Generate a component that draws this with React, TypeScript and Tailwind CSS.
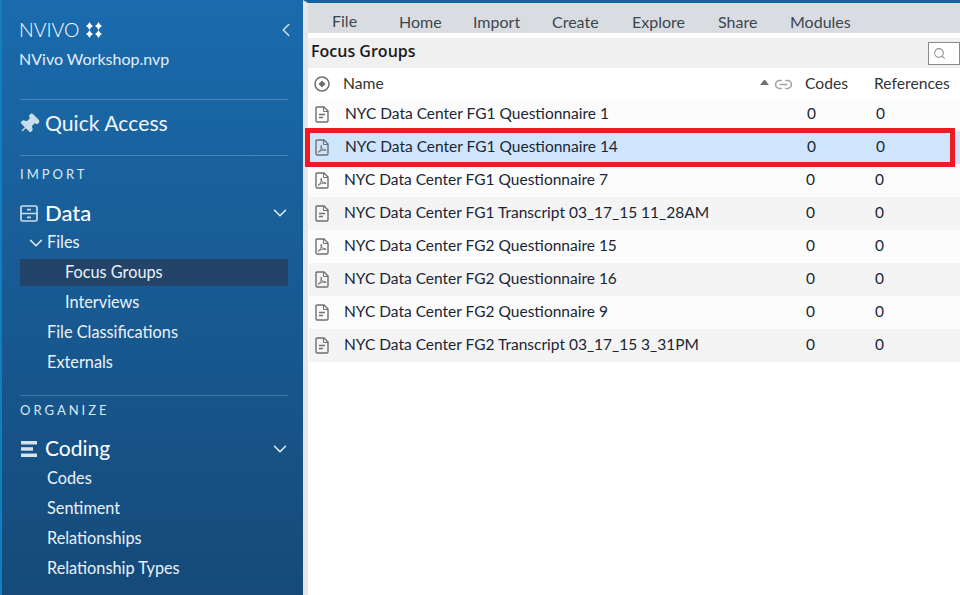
import { ChevronDown, ChevronLeft, Pin, Search, Link2 } from 'lucide-react';

const rows = [
  { name: 'NYC Data Center FG1 Questionnaire 1', type: 'doc' },
  { name: 'NYC Data Center FG1 Questionnaire 14', type: 'pdf', selected: true },
  { name: 'NYC Data Center FG1 Questionnaire 7', type: 'pdf' },
  { name: 'NYC Data Center FG1 Transcript 03_17_15 11_28AM', type: 'doc' },
  { name: 'NYC Data Center FG2 Questionnaire 15', type: 'pdf' },
  { name: 'NYC Data Center FG2 Questionnaire 16', type: 'pdf' },
  { name: 'NYC Data Center FG2 Questionnaire 9', type: 'doc' },
  { name: 'NYC Data Center FG2 Transcript 03_17_15 3_31PM', type: 'doc' },
];

const tabs = [
  { label: 'File', cls: 'w-[41px] -mt-[2px]' },
  { label: 'Home', cls: 'w-[74px] ml-[26px]' },
  { label: 'Import', cls: 'w-[79px]' },
  { label: 'Create', cls: 'w-[80px]' },
  { label: 'Explore', cls: 'w-[86px]' },
  { label: 'Share', cls: 'w-[72px]' },
  { label: 'Modules', cls: 'w-[70px]' },
];

function FileIcon({ type }: { type: string }) {
  return (
    <svg width="16" height="17" viewBox="0 0 16 17" fill="none" stroke="#6f6f6f" strokeWidth="1.4">
      <path d="M2 2.2c0-.7.5-1.2 1.2-1.2H10l4 4v9.8c0 .7-.5 1.2-1.2 1.2H3.2c-.7 0-1.2-.5-1.2-1.2z" />
      <path d="M9.5 1v4.500H14" strokeWidth="1" />
      {type === 'doc' ? (
        <path d="M5 8.500h6M5 11.500h4" strokeWidth="1.300" />
      ) : (
        <path d="M4 13.500c2-1 3.500-4 3.500-6.500 0-1-.8-.8-.6.3.4 2 2.200 3.900 4.600 4.200 1 .1.8-.8-.2-.8-2.200 0-5.600 1.200-7.300 2.800z" strokeWidth="1" />
      )}
    </svg>
  );
}

function Logo() {
  return (
    <div className="flex items-center -ml-[1px]">
      <span className="text-[19.5px] leading-none font-light text-white">NVIVO</span>
      <svg width="16" height="16" viewBox="0 0 16 16" fill="#fff" className="ml-[6px]">
        <path d="M3.500 0l1.500 2.500L7 4 5 5.500 3.500 8 2 5.500 0 4l2-1.500z" />
        <path d="M3.500 8l1.500 2.500L7 12l-2 1.500L3.500 16 2 13.500 0 12l2-1.500z" />
        <path d="M12.500 0L14 2.500 16 4l-2 1.500L12.500 8 11 5.500 9 4l2-1.500z" />
        <path d="M12.500 8l1.500 2.500L16 12l-2 1.500L12.500 16 11 13.500 9 12l2-1.500z" />
      </svg>
    </div>
  );
}

function NavItem({ label, indent, active }: { label: string; indent?: boolean; active?: boolean }) {
  return (
    <div
      className={`h-[27px] mb-[3px] flex items-center text-[16.3px] text-[#eaf2f9] rounded-[1px] ${indent ? 'pl-[45px]' : 'pl-[27px]'} ${active ? 'bg-[#234468]' : ''}`}
    >
      {label}
    </div>
  );
}

export default function App() {
  return (
    <div className="w-[960px] h-[595px] overflow-hidden flex bg-white font-['Lato',sans-serif]">
      {/* Sidebar */}
      <aside className="w-[303px] h-full shrink-0 border-l-2 border-[#0f7fc0] bg-gradient-to-b from-[#1a6bad] to-[#154a79] pl-[18px] pr-[15px] pt-[21px]">
        <div className="flex items-center justify-between h-[18px]">
          <Logo />
          <ChevronLeft size={22} className="text-[#cfe0ee] -mr-[9px]" strokeWidth={1.7} />
        </div>
        <div className="mt-[10px] -ml-[1px] text-[16px] leading-[20px] text-[#e3eef7]">NVivo Workshop.nvp</div>
        <div className="mt-[30px] h-[1px] bg-[#4a86b8]" />
        <div className="h-[55px] pb-[8px] flex items-center gap-[5px]">
          <Pin size={22} fill="#c9dcea" strokeWidth={1.5} className="text-[#c9dcea] rotate-45 -ml-[2px]" />
          <span className="text-[21.2px] text-[#f1f6fb]">Quick Access</span>
        </div>
        <div className="h-[1px] bg-[#4a86b8]" />
        <div className="mt-[10px] text-[13px] leading-[16px] tracking-[3px] text-[#dce9f4]">IMPORT</div>
        <div className="mt-[18px] h-[26px] flex items-center justify-between">
          <div className="flex items-center gap-[7px]">
            <svg width="18" height="17" viewBox="0 0 18 17" fill="none" stroke="#c9dcea" strokeWidth="1.700">
              <rect x="1" y="1" width="16" height="15" rx="1.500" />
              <path d="M1 8.500h16M7 4.700h4M7 12.300h4" />
            </svg>
            <span className="text-[22px] font-medium text-white mb-[2px]">Data</span>
          </div>
          <ChevronDown size={22} className="text-[#e3eef7] -mr-[3px]" strokeWidth={1.7} />
        </div>
        <div className="mt-[3px] h-[27px] mb-[3px] flex items-center text-[16.3px] text-[#eaf2f9] pl-[5px]">
          <ChevronDown size={22} strokeWidth={1.7} className="text-[#e3eef7]" />
          Files
        </div>
        <NavItem label="Focus Groups" indent active />
        <NavItem label="Interviews" indent />
        <NavItem label="File Classifications" />
        <NavItem label="Externals" />
        <div className="mt-[19px] h-[1px] bg-[#3f789f]" />
        <div className="mt-[6px] text-[13px] leading-[16px] tracking-[3px] text-[#dce9f4]">ORGANIZE</div>
        <div className="mt-[18px] h-[26px] flex items-center justify-between">
          <div className="flex items-center gap-[7px]">
            <svg width="18" height="18" viewBox="0 0 18 18" fill="#d5e3ee">
              <rect x="1" y="1" width="16" height="3.500" />
              <rect x="1" y="7.200" width="12" height="3.500" />
              <rect x="1" y="13.500" width="16" height="3.500" />
            </svg>
            <span className="text-[21px] text-white mb-[2px]">Coding</span>
          </div>
          <ChevronDown size={22} className="text-[#e3eef7] -mr-[3px]" strokeWidth={1.7} />
        </div>
        <div className="mt-[3px]">
          <NavItem label="Codes" />
          <NavItem label="Sentiment" />
          <NavItem label="Relationships" />
          <NavItem label="Relationship Types" />
        </div>
      </aside>

      {/* Main area */}
      <main className="relative flex-1 h-full flex flex-col border-t-[3px] border-[#14639f] border-l-[5px] border-l-[#e4e6e8]">
        <div className="h-[30px] bg-[#d9dde1] flex items-center text-[16px] text-[#3c4650] pl-[24px] pt-[7px]">
          {tabs.map((t) => (
            <div key={t.label} className={`shrink-0 ${t.cls}`}>{t.label}</div>
          ))}
        </div>
        <div className="h-[5px] bg-white" />
        <div className="h-[30px] bg-[#f0f0f0] flex items-center justify-between pl-[3px]">
          <span className="text-[16px] -mt-[5px] font-['Open_Sans',sans-serif] font-semibold text-[#1a1a1a]">Focus Groups</span>
          <div className="w-[32px] h-[23px] border border-[#8a8a8a] bg-white flex items-center pl-[4px]">
            <Search size={13} className="text-[#8f8f8f]" />
          </div>
        </div>
        <div className="h-[30px] pt-[2px] flex items-center text-[15.7px] text-[#333] pl-[6px]">
          <svg width="16" height="16" viewBox="0 0 16 16" fill="none" stroke="#6e6e6e" strokeWidth="1.500">
            <circle cx="8" cy="8" r="7" />
            <path d="M8 4.500L11.500 8 8 11.500 4.500 8z" fill="#6e6e6e" stroke="none" />
          </svg>
          <span className="ml-[13px]">Name</span>
          <div className="ml-auto w-[9px] h-0 border-x-[4.500px] border-x-transparent border-b-[5px] border-b-[#6f6f6f] mb-[4px] mr-[5px]" />
          <Link2 size={19} className="text-[#a0a0a0] mr-[12px]" />
          <span className="w-[69px]">Codes</span>
          <span className="w-[86px]">References</span>
        </div>
        <div>
          {rows.map((r, i) => (
            <div
              key={r.name}
              className={`h-[33px] flex items-center text-[15.5px] text-[#1a2535] ${r.selected ? 'bg-[#cfe5fb]' : i % 2 ? 'bg-[#f4f4f4]' : 'bg-[#fcfcfc]'} ml-[1px]`}
            >
              <div className="w-[35px] pl-[5px] shrink-0"><FileIcon type={r.type} /></div>
              <span className={`flex-1 mb-[2px] ${i < 2 ? 'pl-[1px]' : ''}`}>{r.name}</span>
              <span className="w-[69px] mb-[2px]">0</span>
              <span className={`mb-[2px] ${i < 2 ? 'w-[84px]' : 'w-[85px]'}`}>0</span>
            </div>
          ))}
        </div>
        {/* red annotation box */}
        <div className="absolute left-[-3px] top-[125px] w-[650px] h-[39px] border-[5px] border-[#ed1c24]" />
      </main>
    </div>
  );
}
